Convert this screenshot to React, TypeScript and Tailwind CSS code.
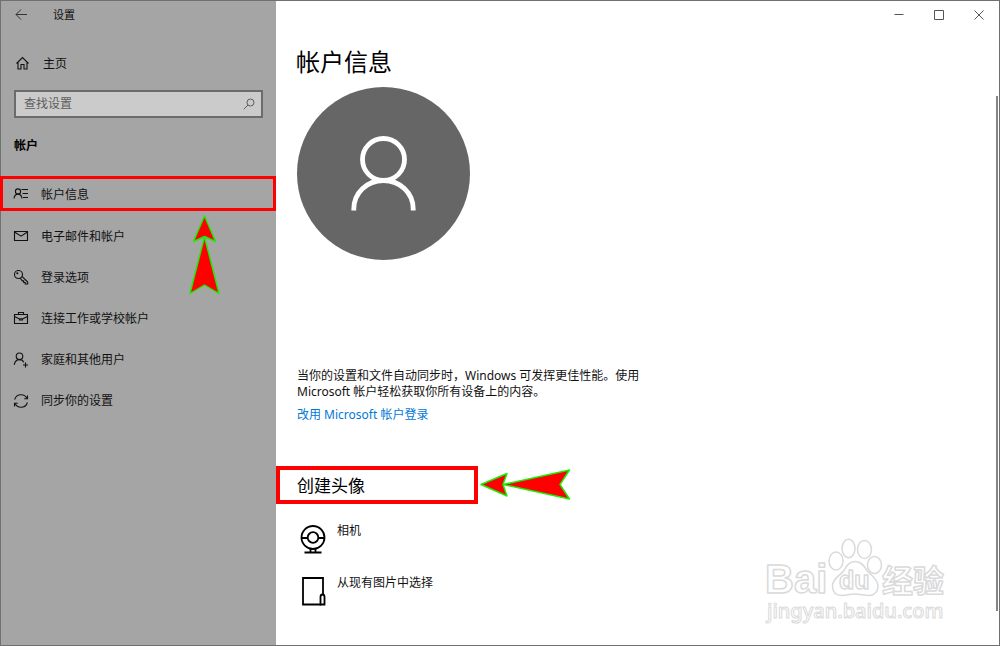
import React from "react";

type IconProps = {
  children: React.ReactNode;
};

function NavIcon({ children }: IconProps) {
  return (
    <svg
      viewBox="0 0 16 16"
      className="h-4 w-4 shrink-0"
      fill="none"
      stroke="currentColor"
      strokeWidth="1.1"
      aria-hidden="true"
    >
      {children}
    </svg>
  );
}

const navItems = [
  {
    label: "电子邮件和帐户",
    icon: (
      <NavIcon>
        <path d="M1.5 2.5h13v9h-13z" />
        <path d="M1.5 3 8 7.2 14.5 3" />
      </NavIcon>
    ),
  },
  {
    label: "登录选项",
    icon: (
      <NavIcon>
        <circle cx="5.5" cy="4.5" r="4" />
        <circle cx="4.3" cy="3.3" r="0.5" />
        <path d="M9 6.3 14.7 12v2h-2.5v-1.5h-1.500v-1.600H9.300L7.200 8.200" />
      </NavIcon>
    ),
  },
  {
    label: "连接工作或学校帐户",
    icon: (
      <NavIcon>
        <path d="M1.5 3.5h13v9h-13z" />
        <path d="M5.5 3.5v-2h5v2M1.5 5.5l4.5 2.300h4l4.500-2.300M6.500 7.500v1.500h3V7.500" />
      </NavIcon>
    ),
  },
  {
    label: "家庭和其他用户",
    icon: (
      <NavIcon>
        <circle cx="6.5" cy="4.3" r="3.3" />
        <path d="M1.2 12.800C1.700 9.700 3.600 7.600 6.500 7.600c2 0 3.500 1 4.300 2.800M12.500 10.500v5M10 13h5" />
      </NavIcon>
    ),
  },
  {
    label: "同步你的设置",
    icon: (
      <NavIcon>
        <path d="M1.600 6.500C2.500 3.600 5 1.700 8 1.700c2.600 0 4.900 1.400 6 3.800M14.400 9.500c-.9 2.900-3.400 4.800-6.400 4.800-2.600 0-4.900-1.400-6-3.800" />
        <path d="M14.500 2.500v3.300h-3.300M1.500 13.500v-3.300h3.300" />
      </NavIcon>
    ),
  },
];

function Sidebar() {
  return (
    <aside className="flex w-[275px] shrink-0 flex-col bg-[#a5a5a5] text-[#111]">
      <div className="flex h-7 items-center gap-6 pl-3">
        <button type="button" aria-label="返回" className="flex h-7 w-4 items-center text-[#333]">
          <svg viewBox="0 0 16 16" className="h-4 w-4" fill="none" stroke="currentColor">
            <path d="M3 7.500h11M8 2.500l-5 5 5 5" />
          </svg>
        </button>
        <span className="text-[11px]">设置</span>
      </div>

      <a href="#home" className="mt-[23px] flex h-6 items-center gap-3 pl-[14px] text-xs">
        <NavIcon>
          <path d="M1.500 7.500 7.500 1.500l6 6M3 6.200V13h3V8.500h3V13h3V6.200" />
        </NavIcon>
        主页
      </a>

      <label className="mx-[13px] mt-[14px] flex h-7 items-center border-2 border-[#6b6b6b] bg-[#cbcbcb] pr-1.5 pl-2">
        <input
          type="text"
          aria-label="查找设置"
          placeholder="查找设置"
          className="min-w-0 flex-1 bg-transparent text-xs outline-none placeholder:text-[#5c5c5c]"
        />
        <svg viewBox="0 0 12 12" className="h-3 w-3 text-[#5c5c5c]" fill="none" stroke="currentColor">
          <circle cx="7.500" cy="4.500" r="3.500" />
          <path d="M5 7 .8 11.200" />
        </svg>
      </label>

      <h2 className="mt-5 pl-[13px] text-xs leading-4 font-bold text-black">帐户</h2>

      <nav className="relative mt-[22px] flex flex-col text-xs">
        <a
          href="#info"
          aria-current="page"
          className="-ml-px flex h-[35px] items-center gap-3 border-[3px] border-[#ff0000] pl-2.5"
        >
          <NavIcon>
            <circle cx="5" cy="5.500" r="2.600" />
            <path d="M1 12.500C1.300 9.800 2.800 8.100 5 8.100s3.700 1.700 4 4.400M8.500 3.500H15M9.500 7.500H15M10 11.500H15" />
          </NavIcon>
          <span className="pt-0.5">帐户信息</span>
        </a>
        <div className="mt-[5px] flex flex-col">
          {navItems.map((item) => (
            <a
              key={item.label}
              href="#"
              className="flex h-[41px] items-center gap-3 pl-3"
            >
              {item.icon}
              {item.label}
            </a>
          ))}
        </div>

        {/* Arrow pointing up at the selected entry */}
        <svg
          viewBox="0 0 32 80"
          className="absolute top-[39px] left-[187px] h-20 w-8"
          fill="#ff0000"
          stroke="#14f000"
          strokeWidth="1.400"
          strokeLinejoin="round"
          aria-hidden="true"
        >
          <path d="M16.500 1 27.500 26.500 16.500 21.500 5.500 26.500z" />
          <path d="M16.500 22 31 78.500 16.500 70 2 78.500z" />
        </svg>
      </nav>
    </aside>
  );
}

function WindowControls() {
  return (
    <div className="flex h-7 justify-end text-[#555]">
      <button type="button" aria-label="最小化" className="flex w-10 items-center justify-center">
        <svg viewBox="0 0 10 10" className="h-2.5 w-2.5" fill="none" stroke="currentColor">
          <path d="M.5 4.500h9" />
        </svg>
      </button>
      <button type="button" aria-label="最大化" className="flex w-10 items-center justify-center">
        <svg viewBox="0 0 10 10" className="h-2.5 w-2.5" fill="none" stroke="currentColor">
          <path d="M.5.5h9v9h-9z" />
        </svg>
      </button>
      <button type="button" aria-label="关闭" className="flex w-10 items-center justify-center">
        <svg viewBox="0 0 10 10" className="h-2.5 w-2.5" fill="none" stroke="currentColor">
          <path d="m.5.5 9 9M9.500.5l-9 9" />
        </svg>
      </button>
    </div>
  );
}

function Watermark() {
  return (
    <svg
      viewBox="0 0 190 92"
      className="pointer-events-none absolute right-[48px] bottom-[18px] h-[92px] w-[190px]"
      fill="#ffffff"
      stroke="#dadada"
      strokeWidth="1.500"
      strokeLinejoin="round"
    >
      <text x="4" y="58" className="font-['Liberation_Sans',sans-serif] text-[40px] font-bold">
        Bai
      </text>
      <ellipse cx="75" cy="26" rx="7" ry="9" />
      <ellipse cx="87.500" cy="13.500" rx="6.500" ry="9.200" />
      <ellipse cx="103.500" cy="14.500" rx="7" ry="9" />
      <ellipse cx="113.500" cy="30" rx="7" ry="8.500" />
      <path d="M94 26.500c6 0 9 4 12 9 3 4.500 11 8 11 15.500 0 6-4 9.500-9 9.500-5 0-9-1.500-14-1.500s-9 1.500-13 1.500c-6 0-9.500-3.500-9.500-9.500 0-7.500 7.500-10.500 11.500-15.500 3-5 5-9 11-9z" />
      <text x="78" y="54" className="font-['Liberation_Sans',sans-serif] text-[25px] font-bold">
        du
      </text>
      <text x="121" y="57" className="font-['Noto_Sans_CJK_SC',sans-serif] text-[31px] font-bold">
        经验
      </text>
      <text
        x="6"
        y="83"
        strokeWidth="1"
        className="font-['Noto_Sans',sans-serif] text-[20px] font-medium"
      >
        jingyan.baidu.com
      </text>
    </svg>
  );
}

function App() {
  return (
    <div className="relative flex min-h-screen border border-[#707070] bg-white font-['Noto_Sans','Noto_Sans_CJK_SC',sans-serif] text-[#111]">
      <Sidebar />

      <main className="min-w-0 flex-1">
        <WindowControls />

        <div className="pl-[21px]">
          <h1 className="mt-[17px] -ml-px text-2xl leading-8 text-black">帐户信息</h1>

          <div className="mt-[9px] flex h-[173px] w-[173px] items-center justify-center rounded-full bg-[#666]">
            <svg
              viewBox="0 0 66 76"
              className="h-[76px] w-[66px]"
              fill="none"
              stroke="#ffffff"
              strokeWidth="4.800"
              aria-hidden="true"
            >
              <circle cx="32.500" cy="23.500" r="21" />
              <path d="M2.800 74.500v-1.500c0-16 13-28.500 29.700-28.500s29.700 12.500 29.700 28.500v1.500" />
            </svg>
          </div>

          <p className="mt-[108px] max-w-[352px] text-xs leading-4">
            当你的设置和文件自动同步时，Windows 可发挥更佳性能。使用 Microsoft
            帐户轻松获取你所有设备上的内容。
          </p>
          <a href="#signin" className="mt-[7px] block w-fit text-xs leading-4 text-[#0078d7]">
            改用 Microsoft 帐户登录
          </a>

          <div className="relative mt-[43px] -ml-[21px] w-[202px]">
            <h2 className="flex h-[38px] items-center border-4 border-[#ff0000] pt-0.5 pl-[17px] text-[17px] text-black">
              创建头像
            </h2>
            {/* Arrow pointing left at the section title */}
            <svg
              viewBox="0 0 92 32"
              className="absolute top-[3px] left-[203px] h-8 w-[92px]"
              fill="#ff0000"
              stroke="#14f000"
              strokeWidth="1.400"
              strokeLinejoin="round"
              aria-hidden="true"
            >
              <path d="M2 15.500 28 4.500 24 15.500 28 27z" />
              <path d="M24 15.500 90.500 1 81 15.500 90.500 30z" />
            </svg>
          </div>

          <div className="mt-[19px] flex flex-col items-start text-xs leading-4">
            <button type="button" className="flex h-[52px] items-start gap-2 pl-0.5">
              <svg
                viewBox="0 0 30 32"
                className="h-8 w-[30px]"
                fill="none"
                stroke="#000000"
                strokeWidth="1.800"
                aria-hidden="true"
              >
                <circle cx="14" cy="14.500" r="11.500" />
                <circle cx="14" cy="14.500" r="5.300" />
                <path d="M2.500 15h6.200M19.300 15h6.200M11.500 26v3M16.500 26v3M5.500 29.500h17" />
              </svg>
              相机
            </button>
            <button type="button" className="flex h-[52px] items-start gap-2 pl-0.5">
              <svg
                viewBox="0 0 30 32"
                className="h-8 w-[30px]"
                fill="none"
                stroke="#000000"
                strokeWidth="1.800"
                aria-hidden="true"
              >
                <path d="M24 19V3H4v26.500h18" />
                <path d="M21.500 29.500V22c0-1.500 1-2.500 2-2.500s2 1 2 2.500v7.500z" />
              </svg>
              从现有图片中选择
            </button>
          </div>
        </div>
      </main>

      <div className="absolute top-[95px] right-px bottom-[34px] w-0.5 bg-[#858585]" />
      <Watermark />
    </div>
  );
}

export default App;
